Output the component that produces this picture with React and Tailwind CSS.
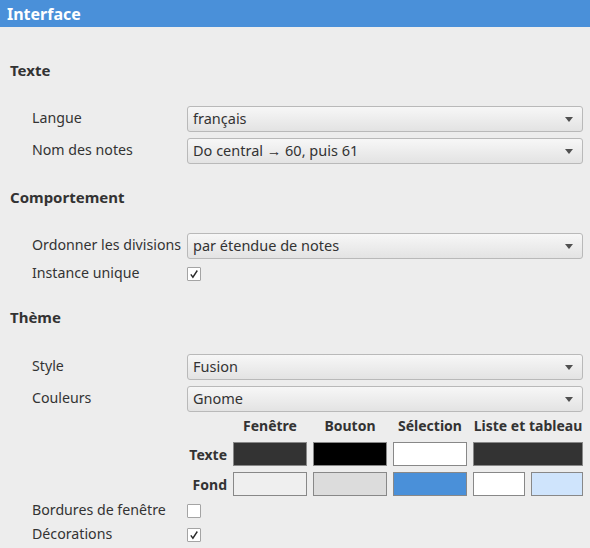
function Heading({ children, className = '' }) {
  return (
    <p className={`h-[22px] leading-[22px] pl-[10px] font-bold text-[15px] text-[#333333] ${className}`}>
      {children}
    </p>
  )
}

function Combo({ value }) {
  return (
    <div className="h-[26px] flex items-center justify-between rounded-[3px] border border-[#b9b9b9] bg-gradient-to-b from-[#f7f7f7] to-[#e3e3e3] pl-[5px] pr-[9px]">
      <span className="text-[14.5px] text-[#333333]">{value}</span>
      <svg width="8" height="5" viewBox="0 0 8 5">
        <path d="M0 0 H8 L4 5 Z" fill="#505050" />
      </svg>
    </div>
  )
}

function Check({ checked }) {
  return (
    <div className="w-[14px] h-[14px] bg-white border border-[#a4a4a4] rounded-[1px] flex items-center justify-center">
      {checked && (
        <svg width="10" height="10" viewBox="0 0 10 10">
          <path d="M1.8 5.4 L3.9 8.2 L8.3 1.5" fill="none" stroke="#2a2a2a" strokeWidth="1.4" />
        </svg>
      )}
    </div>
  )
}

function Row({ label, children, className = '' }) {
  return (
    <div className={`flex items-center ${className}`}>
      <span className="w-[187px] pl-[32px] shrink-0 text-[14.2px] leading-[20px] -mt-[2px] text-[#333333] whitespace-nowrap">{label}</span>
      <div className="flex-1">{children}</div>
    </div>
  )
}

function Swatch({ color, className = 'w-[74px]' }) {
  return <div className={`h-[24px] border border-[#888888] ${className}`} style={{ backgroundColor: color }} />
}

export default function App() {
  return (
    <div className="w-[590px] h-[548px] bg-[#ededed] overflow-hidden" style={{ fontFamily: '"Noto Sans", "Open Sans", sans-serif' }}>
      <div className="h-[27px] bg-[#4a90d9] px-[7px] flex items-center">
        <span className="text-white font-bold text-[16px]">Interface</span>
      </div>

      <div className="pr-[7px]">
        <Heading className="mt-[32px]">Texte</Heading>
        <Row label="Langue" className="mt-[25px]">
          <Combo value="français" />
        </Row>
        <Row label="Nom des notes" className="mt-[6px]">
          <Combo value="Do central → 60, puis 61" />
        </Row>

        <Heading className="mt-[22px]">Comportement</Heading>
        <Row label="Ordonner les divisions" className="mt-[25px]">
          <Combo value="par étendue de notes" />
        </Row>
        <Row label="Instance unique" className="mt-[4px] h-[22px]">
          <Check checked />
        </Row>

        <Heading className="mt-[21px]">Thème</Heading>
        <Row label="Style" className="mt-[26px]">
          <Combo value="Fusion" />
        </Row>
        <Row label="Couleurs" className="mt-[6px]">
          <Combo value="Gnome" />
        </Row>

        <div className="ml-[187px] mt-[4px] grid grid-cols-[40px_74px_74px_74px_110px] gap-x-[6px] gap-y-[6px] items-center text-[14px] font-bold text-[#333333]">
          <span />
          <span className="text-center leading-[20px]">Fenêtre</span>
          <span className="text-center leading-[20px]">Bouton</span>
          <span className="text-center leading-[20px]">Sélection</span>
          <span className="text-center leading-[20px] whitespace-nowrap">Liste et tableau</span>

          <span className="text-right">Texte</span>
          <Swatch color="#333333" />
          <Swatch color="#000000" />
          <Swatch color="#ffffff" />
          <Swatch color="#333333" className="w-[110px]" />

          <span className="text-right">Fond</span>
          <Swatch color="#efefef" />
          <Swatch color="#dcdcdc" />
          <Swatch color="#4a90d9" />
          <div className="flex gap-[6px]">
            <Swatch color="#ffffff" className="w-[52px]" />
            <Swatch color="#cfe4fc" className="w-[52px]" />
          </div>
        </div>

        <Row label="Bordures de fenêtre" className="mt-[4px] h-[22px]">
          <Check />
        </Row>
        <Row label="Décorations" className="mt-[2px] h-[22px]">
          <Check checked />
        </Row>
      </div>
    </div>
  )
}
